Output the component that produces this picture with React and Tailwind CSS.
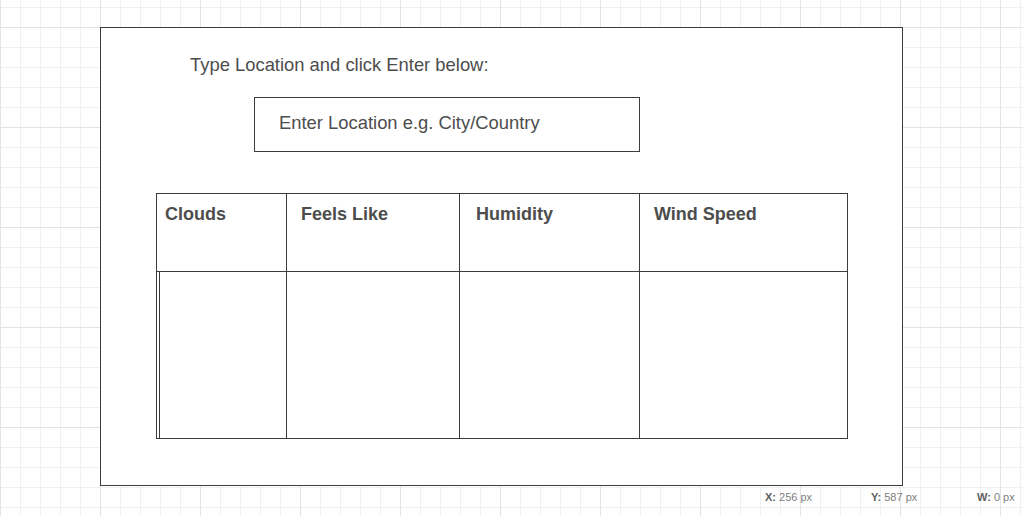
const cols = [
  { label: 'Clouds', w: 'w-[130px]', pl: 'pl-[8px]' },
  { label: 'Feels Like', w: 'w-[173px]', pl: 'pl-[14px]' },
  { label: 'Humidity', w: 'w-[180px]', pl: 'pl-[16px]' },
  { label: 'Wind Speed', w: 'flex-1', pl: 'pl-[14px]' },
];

const Stat = ({ label, value }) => (
  <div className="w-[106px] shrink-0 text-[11px] leading-[13px]">
    <span className="font-bold text-[#606060]">{label}</span>{' '}
    <span className="text-[#808080]">{value}</span>
  </div>
);

const App = () => {
  return (
    <div className="h-[516px] w-full overflow-hidden bg-white bg-[linear-gradient(to_right,#e4e4e4_1px,transparent_1px),linear-gradient(to_bottom,#e4e4e4_1px,transparent_1px),linear-gradient(to_right,#f0f0f0_1px,transparent_1px),linear-gradient(to_bottom,#f0f0f0_1px,transparent_1px)] [background-size:100px_100px,100px_100px,20px_20px,20px_20px] [background-position:0_27px,0_27px,0_7px,0_7px] font-['Liberation_Sans',Arial,sans-serif] text-[#4d4d4d]">
      <div className="pl-[100px] pt-[27px]">
        <div className="w-[803px] h-[459px] border border-[#3c3c3c] bg-white">
          <div className="pl-[89px] pt-[27px] text-[18.4px] leading-[20px]">
            Type Location and click Enter below:
          </div>

          <div className="ml-[153px] mt-[22px] w-[386px] h-[55px] border border-[#3c3c3c] flex items-center pl-[24px] pb-[3px] text-[18.4px] leading-[20px]">
            Enter Location e.g. City/Country
          </div>

          <div className="ml-[55px] mt-[41px] w-[692px] h-[246px] border border-[#3c3c3c] flex flex-col">
            <div className="flex h-[78px] border-b border-[#3c3c3c]">
              {cols.map((c, i) => (
                <div
                  key={c.label}
                  className={`${c.w} ${c.pl} pt-[10px] text-[18px] leading-[20px] font-bold ${i < cols.length - 1 ? 'border-r border-[#3c3c3c]' : ''}`}
                >
                  {c.label}
                </div>
              ))}
            </div>
            <div className="flex flex-1">
              {cols.map((c, i) => (
                <div
                  key={c.label}
                  className={`${c.w} ${i < cols.length - 1 ? 'border-r border-[#3c3c3c]' : ''}`}
                >
                  {i === 0 && <div className="ml-[2px] h-full border-l border-[#3c3c3c]"></div>}
                </div>
              ))}
            </div>
          </div>
        </div>
      </div>

      <div className="flex pl-[765px] mt-[5px]">
        <Stat label="X:" value="256 px" />
        <Stat label="Y:" value="587 px" />
        <Stat label="W:" value="0 px" />
      </div>
    </div>
  );
};

export default App;
